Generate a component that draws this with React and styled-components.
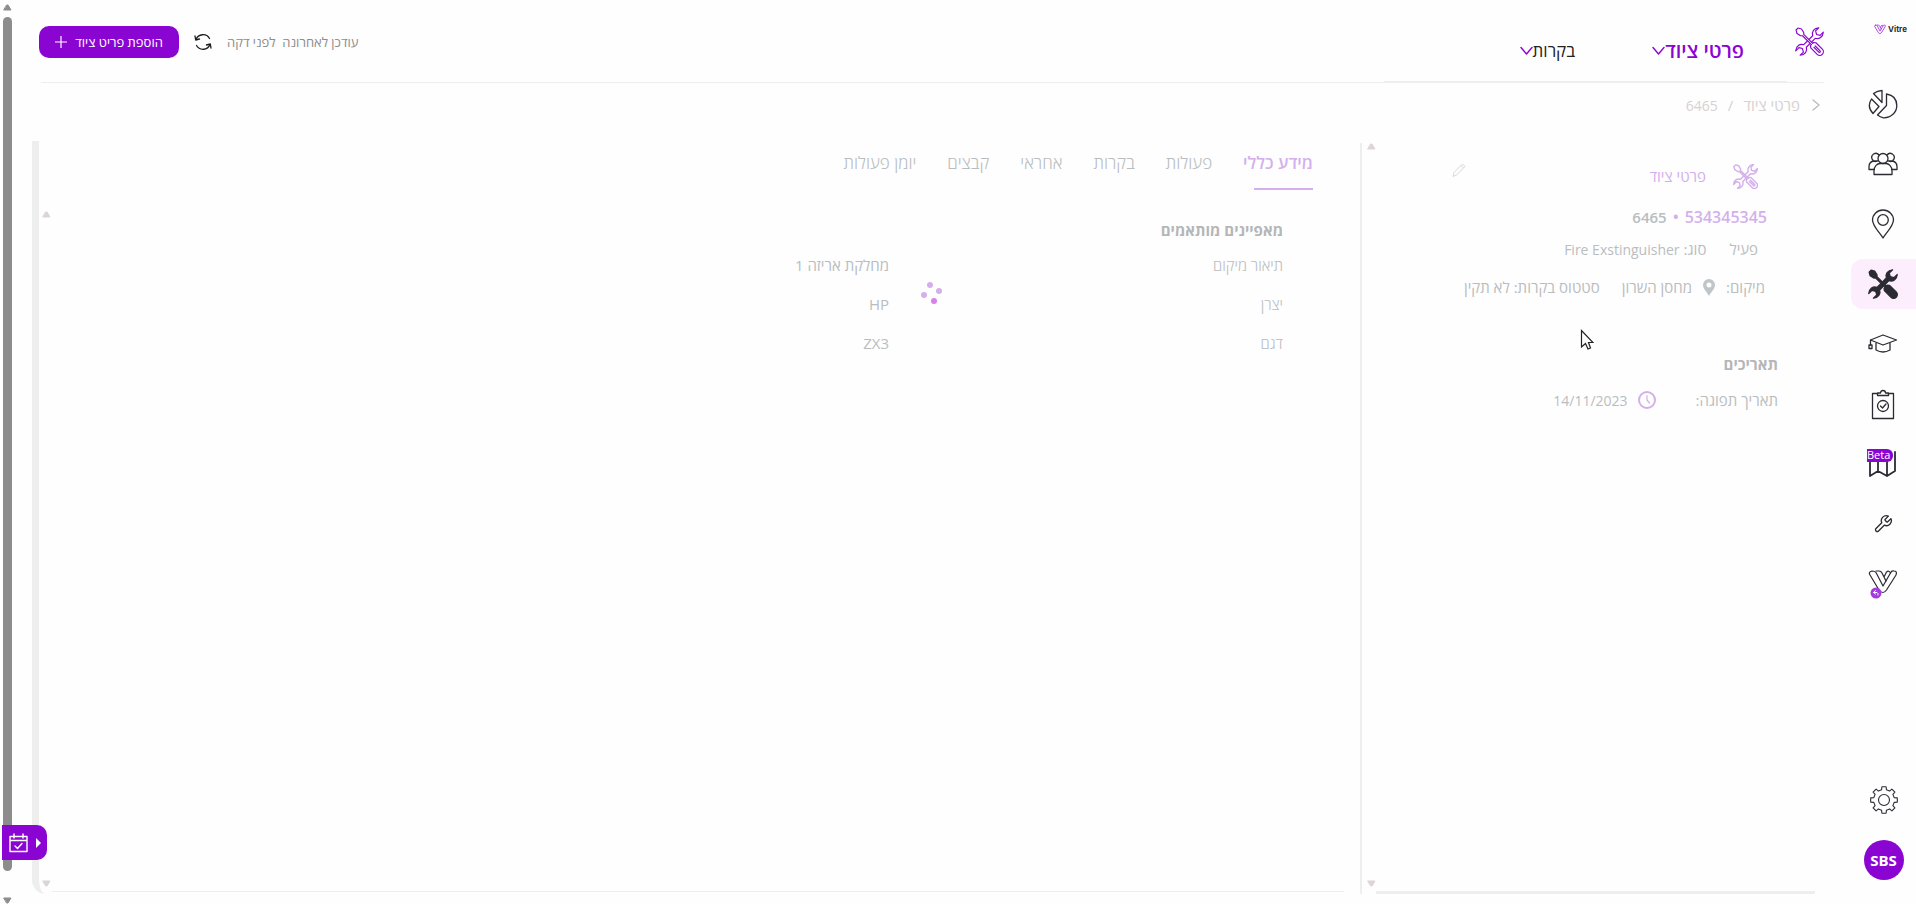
import React from "react";
import styled, { createGlobalStyle } from "styled-components";

const PURPLE = "#8b05d2";
const PALE_PURPLE = "#d3b0ec";
const PALE = "#b9bdbf";
const LINE = "#eeeeee";

const Global = createGlobalStyle`
  *, *::before, *::after { box-sizing: border-box; }
  body { margin: 0; background: #fefefe; overflow: hidden; }
  body, button { font-family: "Open Sans", "Noto Sans", "DejaVu Sans", sans-serif; }
  button { border: 0; padding: 0; background: none; color: inherit; font-size: inherit; cursor: pointer; }
  a { color: inherit; text-decoration: none; }
  h1, h2, p { margin: 0; font-size: inherit; font-weight: inherit; }
  svg { display: block; flex: none; }
`;

const Page = styled.div`
  position: relative;
  display: flex;
  height: 100vh;
`;

const Sidebar = styled.aside`
  display: flex;
  flex-direction: column;
  flex: none;
  width: 65px;
  padding-bottom: 24px;
  color: #2b2b33;
`;

const Logo = styled.a`
  display: flex;
  align-items: center;
  gap: 2px;
  direction: ltr;
  height: 58px;
  margin-bottom: 21px;
  padding-left: 23px;
  font-family: Inter, sans-serif;
  font-size: 8px;
  font-weight: 700;
`;

const SideNav = styled.nav`
  display: flex;
  flex-direction: column;
  gap: 10px;
`;

const SideItem = styled.a`
  position: relative;
  display: flex;
  align-items: center;
  justify-content: center;
  height: 50px;
  padding-right: 2px;
  border-radius: 12px 0 0 12px;
  background: ${(p) => (p.$active ? "#fdeefd" : "transparent")};
`;

const BetaTag = styled.span`
  position: absolute;
  top: 10px;
  left: 16px;
  height: 13px;
  padding-right: 3px;
  border-radius: 0 6px 6px 0;
  background: ${PURPLE};
  color: #fff;
  font-size: 11px;
  line-height: 12px;
`;

const SideFoot = styled.div`
  display: flex;
  flex-direction: column;
  align-items: center;
  gap: 25px;
  margin-top: auto;
`;

const Avatar = styled.button`
  width: 40px;
  height: 40px;
  border-radius: 50%;
  background: ${PURPLE};
  color: #fff;
  font-size: 15px;
  font-weight: 700;
`;

const Main = styled.main`
  display: flex;
  flex-direction: column;
  flex: 1;
  min-width: 0;
  padding: 0 27px 10px 0;
`;

const Header = styled.header`
  display: flex;
  align-items: center;
  justify-content: space-between;
  height: 83px;
  margin-left: 2px;
  border-bottom: 1px solid ${LINE};
`;

const HeaderNav = styled.nav`
  display: flex;
  align-items: center;
  align-self: stretch;
  color: ${PURPLE};
`;

const HeaderTabs = styled.div`
  display: flex;
  align-items: center;
  gap: 77px;
  align-self: stretch;
  width: 403px;
  margin-right: 8px;
  padding: 20px 43px 0 0;
  border-bottom: 1px solid ${LINE};
`;

const MenuButton = styled.button`
  display: flex;
  align-items: center;
  color: ${(p) => (p.$active ? PURPLE : "#222")};
  font-size: ${(p) => (p.$active ? 20 : 17)}px;
  font-weight: ${(p) => (p.$active ? 600 : 400)};
  line-height: 24px;
  white-space: nowrap;

  svg { color: ${PURPLE}; }
`;

const Actions = styled.div`
  display: flex;
  align-items: center;
  gap: 15px;
  margin-left: -2px;
  padding-top: 2px;
  color: #8c8c8c;
  font-size: 13px;
`;

const RefreshButton = styled.button`
  color: #1c1c1c;
`;

const AddButton = styled.button`
  display: flex;
  align-items: center;
  justify-content: center;
  gap: 8px;
  width: 140px;
  height: 32px;
  border-radius: 10px;
  background: ${PURPLE};
  color: #fff;
`;

const Crumbs = styled.nav`
  display: flex;
  align-items: center;
  gap: 10px;
  height: 44px;
  padding-right: 4px;
  color: #d6d0d3;
  font-size: 15px;

  svg { margin-left: 2px; color: ${PALE}; }
`;

const Latin = styled.span`
  font-size: 14px;
`;

const Columns = styled.div`
  display: flex;
  flex: 1;
  min-height: 0;
  margin-top: 14px;
`;

const Details = styled.section`
  display: flex;
  flex-direction: column;
  width: 439px;
  flex: none;
  margin-right: 9px;
  padding: 23px 37px 0 0;
  border-bottom: 3px solid ${LINE};
  color: ${PALE};
  font-size: 15px;
`;

const DetailsHead = styled.div`
  display: flex;
  align-items: center;
  height: 24px;
  padding-right: 20px;
  color: ${PALE_PURPLE};
`;

const DetailsTitle = styled.h1`
  margin-right: 27px;
`;

const EditButton = styled.button`
  margin: 0 auto 12px 76px;
  color: #d8d8d8;
`;

const IdLine = styled.div`
  display: flex;
  align-items: center;
  gap: 6px;
  height: 28px;
  margin-top: 15px;
  padding-right: 11px;
  color: ${PALE_PURPLE};
  font-size: 16px;
  font-weight: 600;
`;

const Serial = styled.span`
  color: ${PALE};
  font-size: 15px;
`;

const Fields = styled.div`
  display: flex;
  align-items: center;
  gap: ${(p) => p.$gap}px;
  height: 24px;
  margin-top: ${(p) => p.$top}px;
  padding-right: ${(p) => p.$inset}px;
  white-space: nowrap;
`;

const Field = styled.div`
  display: flex;
  align-items: center;
  gap: ${(p) => p.$gap || 4}px;
`;

const Section = styled.h2`
  height: 24px;
  margin-top: ${(p) => p.$top}px;
  color: #b4b6b8;
  font-size: 15px;
  font-weight: 700;
  line-height: 24px;
`;

const Gutter = styled.div`
  display: flex;
  flex-direction: column;
  justify-content: space-between;
  flex: none;
  width: 16px;
  margin-top: 2px;
  padding: 0 0 7px 3px;
  color: #dcd5d8;
  border-left: 2px solid ${LINE};
`;

const Info = styled.section`
  display: flex;
  flex: 1;
  min-width: 0;
  margin: 0 0 0 -7px;
  border-left: 7px solid ${LINE};
  border-bottom-left-radius: 14px;
`;

const InfoBody = styled.div`
  flex: 1;
  min-width: 0;
  margin: 0 16px 2px 0;
  border-bottom: 1px solid ${LINE};
  color: ${PALE};
`;

const InfoGutter = styled.div`
  display: flex;
  flex-direction: column;
  justify-content: space-between;
  width: 13px;
  padding: 70px 1px 7px 0;
  color: #dcd5d8;
`;

const Tabs = styled.div`
  display: flex;
  gap: 31px;
  height: 49px;
  padding-right: 31px;
`;

const Tab = styled.button`
  position: relative;
  height: 49px;
  padding-bottom: 6px;
  color: ${(p) => (p.$active ? PALE_PURPLE : PALE)};
  font-size: 17px;
  font-weight: ${(p) => (p.$active ? 600 : 300)};
  white-space: nowrap;

  &::after {
    content: "";
    position: absolute;
    right: 0;
    bottom: 0;
    width: 59px;
    height: 2px;
    background: ${(p) => (p.$active ? PALE_PURPLE : "transparent")};
  }
`;

const Properties = styled.div`
  padding-right: 61px;
  font-size: 15px;
`;

const PropertyTable = styled.table`
  width: 100%;
  margin-top: 3px;
  border-spacing: 0;
  table-layout: fixed;

  th, td { height: 39px; padding: 0; text-align: right; font-weight: 300; }
  th { width: 32%; }
  td { font-weight: 400; }
`;

const ScrollRail = styled.div`
  display: flex;
  flex-direction: column;
  align-items: center;
  gap: 6px;
  flex: none;
  width: 39px;
  padding: 4px 24px 0 0;
  color: #8c8c8c;
`;

const Thumb = styled.div`
  flex: 1;
  width: 9px;
  margin-bottom: 20px;
  border-radius: 5px;
  background: #8c8c8c;
`;

const Drawer = styled.button`
  position: absolute;
  left: 2px;
  bottom: 44px;
  display: flex;
  align-items: center;
  justify-content: flex-end;
  gap: 8px;
  width: 45px;
  height: 35px;
  padding-left: 7px;
  border-radius: 0 10px 10px 0;
  background: ${PURPLE};
  color: #fff;
`;

const Spinner = styled.svg`
  position: absolute;
  left: 921px;
  top: 281px;
`;

const Pointer = styled.svg`
  position: absolute;
  left: 1580px;
  top: 329px;
`;

const Icon = ({ w = 30, h = w, box, sw = 1.3, color = "currentColor", children, ...rest }) => (
  <svg width={w} height={h} viewBox={box || `0 0 ${w} ${h}`} fill="none" stroke={color} strokeWidth={sw} strokeLinejoin="round" strokeLinecap="round" aria-hidden="true" {...rest}>
    {children}
  </svg>
);

const Tools = ({ size = 30, solid, sw = 1.3 }) => (
  <Icon w={size} box="0 0 32 32" sw={sw}>
    <g transform="translate(16 16)">
      <g fill={solid ? "currentColor" : "none"}>
        <path transform="rotate(45)" d="M-2-7C-6-9-7-14-3.500-18V-13L0-11L3.500-13V-18C7-14 6-9 2-7V7C6 9 7 14 3.500 18V13L0 11L-3.500 13V18C-7 14-6 9-2 7Z" />
        <path transform="rotate(-45)" fill={solid ? "currentColor" : "#fefefe"} d="M-1.500-19.500H1.500L3.500-16L2.500-11.500L1-10V4H2.500L4 6V16A4 4 0 0 1-4 16V6L-2.500 4H-1V-10L-2.500-11.500L-3.500-16Z" />
        {!solid && <path transform="rotate(-45)" d="M-1 8V15.500A1 1 0 0 0 1 15.500V8" />}
      </g>
    </g>
  </Icon>
);

const Chevron = () => (
  <Icon w={13} h={10} sw={1.4}>
    <path d="M1 1.500L6.500 8L12 1.500" />
  </Icon>
);

const Triangle = ({ down }) => (
  <Icon w={9} h={7} sw={1} fill="currentColor">
    <path d={down ? "M1 1H8L5 6H4Z" : "M1 6H8L5 1H4Z"} />
  </Icon>
);

const Pie = () => (
  <Icon w={30}>
    <path d="M18.500 5V16.500L9.500 26A13 12 0 0 0 15.500 28.800C23 29 28.800 23.500 28.800 16.500C28.800 10 24.500 6 18.500 5Z" />
    <path d="M14 1.500V13.500L5.500 4.500Q9.500 1.700 14 1.500Z" />
    <path d="M3.500 10L11 17.500L5 24.500Q-1.500 17.500 3.500 10Z" />
  </Icon>
);

const People = () => (
  <Icon w={30} h={24}>
    <circle cx="15" cy="6.500" r="5" />
    <path d="M6 22.500V19C6 14 9.500 11.500 12 11.500H18C20.500 11.500 24 14 24 19V22.500Z" />
    <path d="M9.500 9A4 4 0 1 1 11 3M6 17.500H1V15C1 11 3 9.500 5.500 9H9.500" />
    <path d="M20.500 9A4 4 0 1 0 19 3M24 17.500H29V15C29 11 27 9.500 24.500 9H20.500" />
  </Icon>
);

const Pin = () => (
  <Icon w={24} h={30}>
    <path d="M12 29C9 24 1.500 17 1.500 11A10.500 10 0 0 1 22.500 11C22.500 17 15 24 12 29Z" />
    <circle cx="12" cy="11" r="5.300" />
  </Icon>
);

const Cap = () => (
  <Icon w={30} h={20}>
    <path d="M15 1L28.500 6L15 11L2.500 6Z M8 9V16Q15 20 22 16V9 M2.500 6V11" />
    <rect x="1" y="11" width="3" height="3.500" />
  </Icon>
);

const Clipboard = () => (
  <Icon w={24} h={31}>
    <path d="M7 4.500H1.500V29.500H22.500V4.500H17M6.500 6.500V4H9.500Q9.500 1.500 12 1.500T14.500 4H17.500V6.500Z" />
    <circle cx="12" cy="17" r="5.500" />
    <path d="M9.500 17L11.500 19L15 15" />
  </Icon>
);

const MapIcon = () => (
  <Icon w={30} h={28} sw={1.800}>
    <path d="M2 4V26L10 21L19 26L27 21V2M10 10V21M19 10V26M2 17V10H6" />
  </Icon>
);

const Wrench = () => (
  <Icon w={20} box="0 0 24 24" sw={1.600}>
    <path d="M14.700 6.300a1 1 0 0 0 0 1.400l1.600 1.600a1 1 0 0 0 1.400 0l3.770-3.770a6 6 0 0 1-7.940 7.940l-6.910 6.910a2.120 2.120 0 0 1-3-3l6.910-6.910a6 6 0 0 1 7.940-7.940l-3.760 3.760z" />
  </Icon>
);

const VPaths = () => (
  <>
    <path d="M4 2Q0 3 2 6L11 21Q15 26 18.500 21L28 6Q29.500 2 26 2Q23.500 1.500 22.500 4L15 17L8 3.500Q7 2 4 2Z" />
    <path d="M8 2H11Q13 2 14 4L18 12M22.500 4Q21 1 18.500 3L16 8" />
  </>
);

const VBadge = () => (
  <Icon w={30} h={30} sw={1.200}>
    <VPaths />
    <circle cx="8" cy="24" r="5.500" fill="#a43be0" stroke="none" />
    <path d="M5.500 23.500L7.500 21.500M5.500 23.500L7.500 25M5.500 23.500H9Q10.500 24 10 26" stroke="#fff" strokeWidth="1" />
  </Icon>
);

const GEAR_POINTS = Array.from({ length: 8 }, (_, i) =>
  [[-13, 10.500], [-9, 13.500], [9, 13.500], [13, 10.500]].map(([offset, r]) => {
    const t = ((i * 45 + offset - 90) * Math.PI) / 180;
    return `${(15 + r * Math.cos(t)).toFixed(1)} ${(15 + r * Math.sin(t)).toFixed(1)}`;
  })
).flat();

const Gear = () => (
  <Icon w={30} sw={1.100}>
    <path d={`M${GEAR_POINTS.join("L")}Z`} />
    <circle cx="15" cy="15" r="5.500" />
  </Icon>
);

const SIDE = [
  ["לוח מחוונים", <Pie key="i" />],
  ["אנשים", <People key="i" />],
  ["מיקומים", <Pin key="i" />],
  ["ציוד", <Tools key="i" size={30} solid />, true],
  ["הדרכות", <Cap key="i" />],
  ["בקרות", <Clipboard key="i" />],
  ["מפה", <MapIcon key="i" />, false, "Beta"],
  ["תחזוקה", <Wrench key="i" />],
  ["Vitre", <VBadge key="i" />],
];

const TABS = ["מידע כללי", "פעולות", "בקרות", "אחראי", "קבצים", "יומן פעולות"];
const PROPS = [["תיאור מיקום", "מחלקת אריזה 1"], ["יצרן", "HP"], ["דגם", "ZX3"]];

export default function App() {
  return (
    <Page dir="rtl">
      <Global />
      <Sidebar>
        <Logo href="#">
          <Icon w={12} h={11} box="0 0 30 26" sw={2.500} color="#b04be6"><VPaths /></Icon>
          Vitre
        </Logo>
        <SideNav>
          {SIDE.map(([label, icon, active, tag]) => (
            <SideItem key={label} href="#" aria-label={label} $active={active}>
              {icon}
              {tag && <BetaTag dir="ltr">{tag}</BetaTag>}
            </SideItem>
          ))}
        </SideNav>
        <SideFoot>
          <button aria-label="הגדרות"><Gear /></button>
          <Avatar>SBS</Avatar>
        </SideFoot>
      </Sidebar>

      <Main>
        <Header>
          <HeaderNav>
            <Tools size={29} />
            <HeaderTabs>
              <MenuButton $active>פרטי ציוד<Chevron /></MenuButton>
              <MenuButton>בקרות<Chevron /></MenuButton>
            </HeaderTabs>
          </HeaderNav>
          <Actions>
            <p>עודכן לאחרונה&nbsp; לפני דקה</p>
            <RefreshButton aria-label="רענון">
              <Icon w={18} sw={1.300}>
                <path d="M2 6.500A7.500 7.500 0 0 1 15.500 5.500M1 3L1.700 7L5.500 6M16 11.500A7.500 7.500 0 0 1 2.500 12.500M17 15L16.300 11L12.500 12" />
              </Icon>
            </RefreshButton>
            <AddButton>
              הוספת פריט ציוד
              <Icon w={12} sw={1.200}><path d="M6 0V12M0 6H12" /></Icon>
            </AddButton>
          </Actions>
        </Header>

        <Crumbs>
          <Icon w={8} h={12} sw={1.400}><path d="M1 1L7 6L1 11" /></Icon>
          <a href="#">פרטי ציוד</a>
          <span>/</span>
          <Latin>6465</Latin>
        </Crumbs>

        <Columns>
          <Details>
            <DetailsHead>
              <Tools size={25} sw={1.800} />
              <DetailsTitle>פרטי ציוד</DetailsTitle>
              <EditButton aria-label="עריכה">
                <Icon w={14} sw={1}><path d="M1 13L2 9.500L10.500 1L13 3.500L4.500 12Z M9 2.500L11.500 5" /></Icon>
              </EditButton>
            </DetailsHead>
            <IdLine>
              <span>534345345</span>
              <span>•</span>
              <Serial>6465</Serial>
            </IdLine>
            <Fields $gap={23} $top={6} $inset={20}>
              <span>פעיל</span>
              <Field><span>סוג:</span><Latin>Fire Exstinguisher</Latin></Field>
            </Fields>
            <Fields $gap={22} $top={14} $inset={13}>
              <Field $gap={11}>
                <span>מיקום:</span>
                <Icon w={12} h={17} fill="#c0c6c8" color="none" fillRule="evenodd">
                  <path d="M6 0A6 6 0 0 1 12 6C12 10 8 13 6 17C4 13 0 10 0 6A6 6 0 0 1 6 0ZM6 3.500A2.500 2.500 0 1 0 6 8.500A2.500 2.500 0 1 0 6 3.500Z" />
                </Icon>
                <span>מחסן השרון</span>
              </Field>
              <Field><span>סטטוס בקרות:</span><span>לא תקין</span></Field>
            </Fields>
            <Section $top={53}>תאריכים</Section>
            <Fields $gap={40} $top={12} $inset={0}>
              <span>תאריך תפוגה:</span>
              <Field $gap={10}>
                <Icon w={18} sw={2} color={PALE_PURPLE}>
                  <circle cx="9" cy="9" r="8" /><path d="M9 4.500V9L11.500 12" strokeWidth="1.2" />
                </Icon>
                <Latin>14/11/2023</Latin>
              </Field>
            </Fields>
          </Details>
          <Gutter><Triangle /><Triangle down /></Gutter>
          <Info>
            <InfoBody>
              <Tabs>
                {TABS.map((t, i) => <Tab key={t} $active={i === 0}>{t}</Tab>)}
              </Tabs>
              <Properties>
                <Section $top={28}>מאפיינים מותאמים</Section>
                <PropertyTable>
                  <tbody>
                    {PROPS.map(([k, v]) => <tr key={k}><th scope="row">{k}</th><td>{v}</td></tr>)}
                  </tbody>
                </PropertyTable>
              </Properties>
            </InfoBody>
            <InfoGutter><Triangle /><Triangle down /></InfoGutter>
          </Info>
        </Columns>
      </Main>

      <ScrollRail>
        <Triangle />
        <Thumb />
        <Triangle down />
      </ScrollRail>

      <Drawer aria-label="יומן">
        <Icon w={6} h={10} fill="currentColor" color="none"><path d="M0 0L5 5L0 10Z" fill="#fff" /></Icon>
        <Icon w={19} h={20} sw={1.400}>
          <path d="M1 3.500H18V18.500H1ZM1 7.500H18M5 1V5M14 1V5M6 13L8.500 15.500L13 10.500" />
        </Icon>
      </Drawer>
      <Spinner width="22" height="24" aria-hidden="true">
        <g fill={PALE_PURPLE}><circle cx="9" cy="4" r="3" /><circle cx="18" cy="10" r="3" /><circle cx="3" cy="14" r="3" /></g>
        <circle cx="13" cy="20" r="3" fill="#d681ec" />
      </Spinner>
      <Pointer width="14" height="22" aria-hidden="true">
        <path d="M1.500 1.500V18L5.500 14.500L8 20L10.500 19L8.500 13.500H13Z" fill="#fff" stroke="#222" strokeWidth="1.2" />
      </Pointer>
    </Page>
  );
}
